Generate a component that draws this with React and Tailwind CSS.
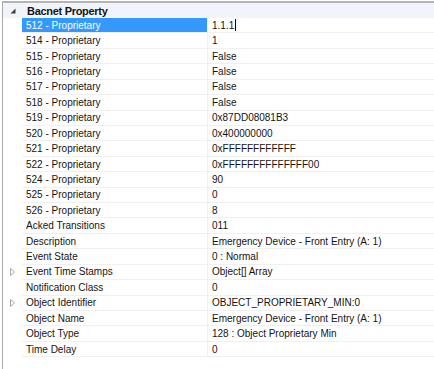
const rows = [
  { name: "512 - Proprietary", value: "1.1.1", selected: true },
  { name: "514 - Proprietary", value: "1" },
  { name: "515 - Proprietary", value: "False" },
  { name: "516 - Proprietary", value: "False" },
  { name: "517 - Proprietary", value: "False" },
  { name: "518 - Proprietary", value: "False" },
  { name: "519 - Proprietary", value: "0x87DD08081B3" },
  { name: "520 - Proprietary", value: "0x400000000" },
  { name: "521 - Proprietary", value: "0xFFFFFFFFFFFF" },
  { name: "522 - Proprietary", value: "0xFFFFFFFFFFFFFF00" },
  { name: "524 - Proprietary", value: "90" },
  { name: "525 - Proprietary", value: "0" },
  { name: "526 - Proprietary", value: "8" },
  { name: "Acked Transitions", value: "011" },
  { name: "Description", value: "Emergency Device - Front Entry (A: 1)" },
  { name: "Event State", value: "0 : Normal" },
  { name: "Event Time Stamps", value: "Object[] Array", expandable: true },
  { name: "Notification Class", value: "0" },
  { name: "Object Identifier", value: "OBJECT_PROPRIETARY_MIN:0", expandable: true },
  { name: "Object Name", value: "Emergency Device - Front Entry (A: 1)" },
  { name: "Object Type", value: "128 : Object Proprietary Min" },
  { name: "Time Delay", value: "0" },
];

const ExpandedGlyph = () => (
  <svg width="6" height="6" viewBox="0 0 6 6">
    <polygon points="5.5,0.5 5.5,5.5 0.5,5.5" fill="#3c3c3c" />
  </svg>
);

const CollapsedGlyph = () => (
  <svg width="6" height="8" viewBox="0 0 6 8">
    <polygon points="0.5,0.5 4.5,4 0.5,7.5" fill="none" stroke="#a6a6a6" strokeWidth="1" />
  </svg>
);

const PropertyRow = ({ row }) => (
  <div className="flex h-[15.43px]">
    {/* gutter */}
    <div className="w-[19px] flex items-center justify-center pl-[1px]">
      {row.expandable && <CollapsedGlyph />}
    </div>
    <div
      className={`w-[185px] flex items-center pl-[4px] border-b border-[#f0f0f0] whitespace-nowrap overflow-hidden ${
        row.selected ? "bg-[#3399ff] text-white" : "text-[#141414]"
      }`}
    >
      {row.name}
    </div>
    <div className="w-[1px] bg-[#f0f0f0]" />
    <div className="flex-1 flex items-center pl-[4px] border-b border-[#f0f0f0] text-[#141414] whitespace-nowrap overflow-hidden">
      {row.value}
      {row.selected && <span className="inline-block w-[1px] h-[12px] bg-black ml-[1px]" />}
    </div>
  </div>
);

export default function App() {
  return (
    <div
      className="w-[434px] h-[369px] bg-white pt-[1px] pl-[2px] overflow-hidden text-[10px]"
      style={{ fontFamily: '"Liberation Sans", Arial, sans-serif' }}
    >
      <div className="h-full border-t-2 border-l border-t-[#b4b4b4] border-l-[#a9a9a9]">
        {/* category header */}
        <div className="flex h-[15px] bg-[#f1f5fb]">
          <div className="w-[19px] flex items-center justify-center pl-[1px] pt-[1px]">
            <ExpandedGlyph />
          </div>
          <div className="flex items-center pl-[5px] pt-[1px] font-bold text-[11px] text-[#141414] tracking-[-0.3px]">
            Bacnet Property
          </div>
        </div>
        {rows.map((row) => (
          <PropertyRow key={row.name} row={row} />
        ))}
      </div>
    </div>
  );
}
